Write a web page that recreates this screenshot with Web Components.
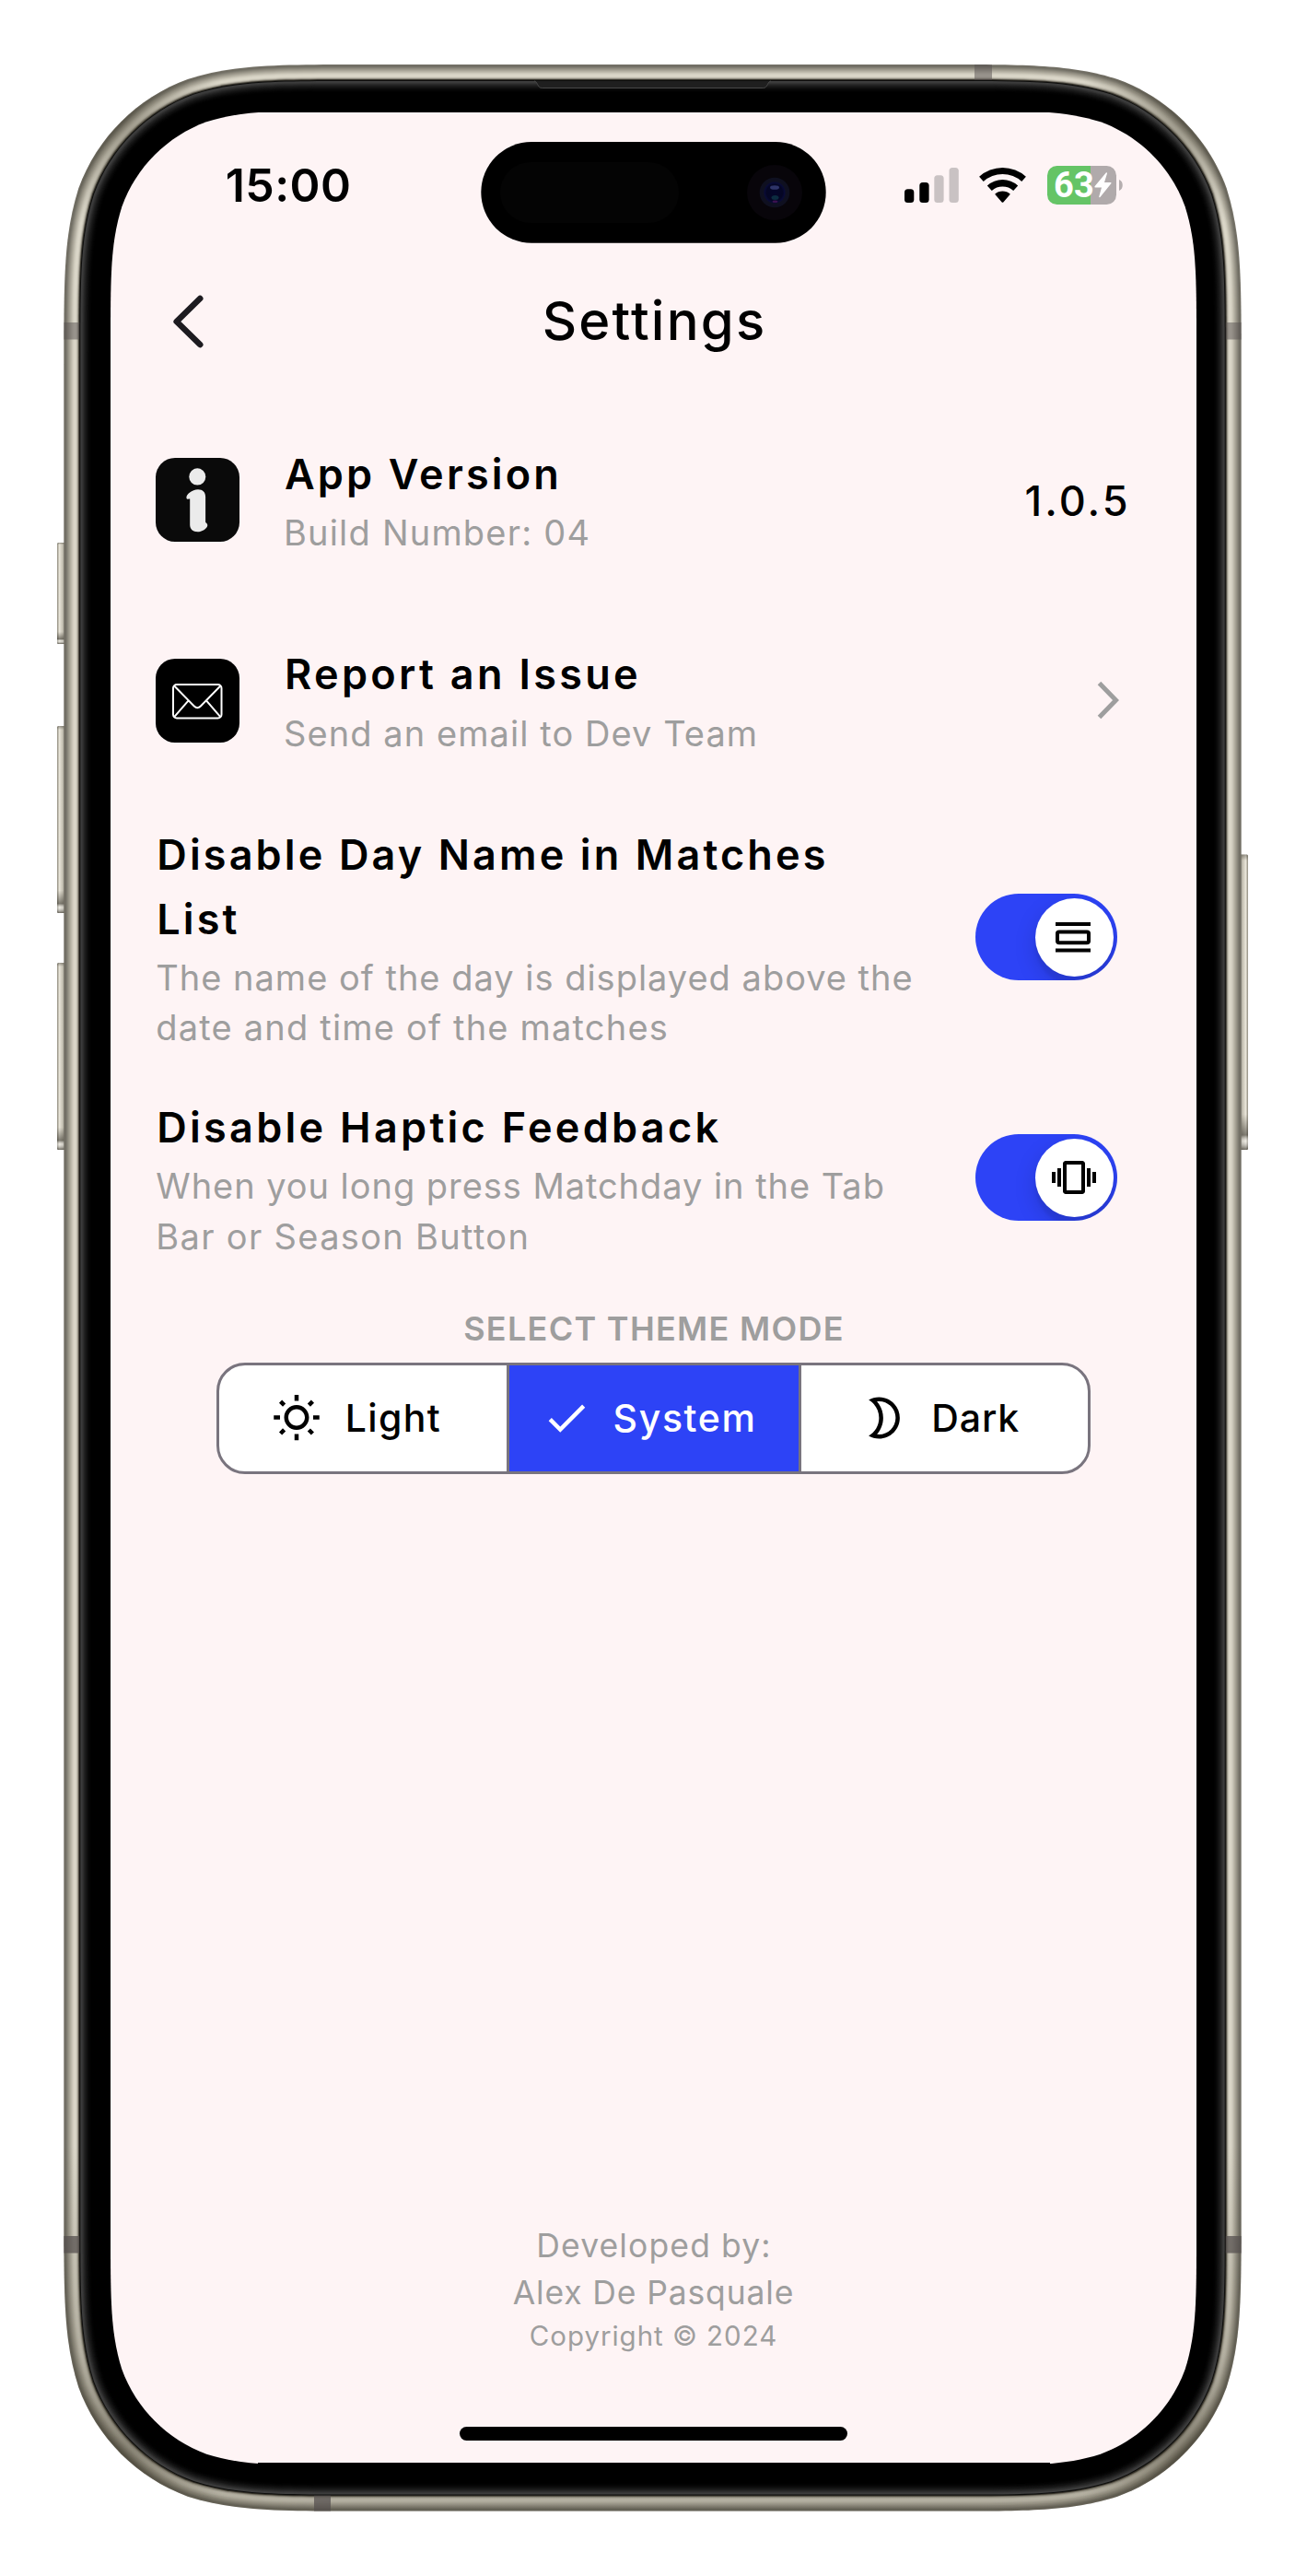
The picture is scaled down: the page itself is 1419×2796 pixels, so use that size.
<!DOCTYPE html>
<html lang="en">
<head>
<meta charset="utf-8">
<title>Settings</title>
<style>
  html, body { margin: 0; background: #fff; }
  body { width: 1419px; height: 2796px; overflow: hidden; font-family: Inter, "Liberation Sans", sans-serif; color: #000; }
</style>
</head>
<body>
<phone-frame>
  <status-bar time="15:00" battery="63"></status-bar>
  <nav-header>Settings</nav-header>
  <setting-item style="--title-ls:3.15px;--sub-ls:1.2px">
    <svg slot="icon" width="91" height="91" viewBox="0 0 91 91"><rect width="91" height="91" rx="21" fill="#0a0a0a"/><ellipse cx="45.3" cy="20.4" rx="9" ry="9.2" fill="#ebebeb"/><path d="M46 34.2c5.3 0 8.1 3.200 8.100 7.900V69.500c0 1.200 2.200 1.300 2.200 3.500 0 4-6.600 7.300-10.700 7.300-5.300 0-8.400-3-8.400-7.500V44.500c-1.500 0-3.600 1.100-3.800-1.600-.2-3.200 6-8.700 12.600-8.700z" fill="#ebebeb"/></svg>
    <span slot="title">App Version</span>
    <span slot="subtitle">Build Number: 04</span>
    <span slot="trailing" style="font:450 45px/60px Inter,sans-serif;letter-spacing:3px;margin:2px 71.5px 0 0">1.0.5</span>
  </setting-item>
  <setting-item style="--title-ls:3.3px;--sub-ls:1.07px">
    <svg slot="icon" width="91" height="91" viewBox="0 0 91 91"><rect width="91" height="91" rx="21" fill="#000"/><g fill="none" stroke="#fff" stroke-width="2"><rect x="19" y="28" width="52.500" height="36.500" rx="4"/><path d="M20.200 29.500 41.800 51.500Q45.300 55 48.800 51.500L70.300 29.500M20.200 63.200 35.400 45.600M70.300 63.200 55.200 45.600"/></g></svg>
    <span slot="title">Report an Issue</span>
    <span slot="subtitle">Send an email to Dev Team</span>
    <svg slot="trailing" width="24" height="42" viewBox="0 0 24 42" style="margin-right:84.5px"><path d="M2.500 2.500 20.500 21 2.500 39.500" fill="none" stroke="#9e9e9e" stroke-width="5"/></svg>
  </setting-item>
  <toggle-row style="height:296px;--title-ls:3.12px;--sub-ls:.99px">
    <span slot="title">Disable Day Name in Matches List</span>
    <span slot="subtitle">The name of the day is displayed above the <span style="letter-spacing:1.190px">date and time of the matches</span></span>
    <svg slot="glyph" width="48" height="48" viewBox="0 0 24 24"><path d="M2 4h19v2H2zM2 18.300h19v2H2zM4 8.200h15a2 1.800 0 0 1 2 1.800v4.300a2 1.800 0 0 1-2 1.800H4a2 1.800 0 0 1-2-1.800V10a2 1.800 0 0 1 2-1.800zm0 2v3.900h15v-3.900z" fill-rule="evenodd"/></svg>
  </toggle-row>
  <toggle-row style="height:226px;--title-ls:3.27px;--sub-ls:.95px">
    <span slot="title">Disable Haptic Feedback</span>
    <span slot="subtitle">When you long press Matchday in the Tab <span style="letter-spacing:1.330px">Bar or Season Button</span></span>
    <svg slot="glyph" width="48" height="48" viewBox="0 0 24 24"><path d="M0 15h2V9H0v6zm3 2h2V7H3v10zm19-8v6h2V9h-2zm-3 8h2V7h-2v10zM16.500 3h-9C6.670 3 6 3.670 6 4.500v15c0 .83.67 1.500 1.500 1.500h9c.83 0 1.500-.67 1.500-1.500v-15c0-.83-.67-1.500-1.500-1.500zM16 19H8V5h8v14z"/></svg>
  </toggle-row>
  <theme-picker></theme-picker>
  <app-footer></app-footer>
</phone-frame>

<script>
const define = (name, html, setup) => {
  const tpl = document.createElement('template');
  tpl.innerHTML = html;
  customElements.define(name, class extends HTMLElement {
    constructor() {
      super();
      this.attachShadow({ mode: 'open' }).append(tpl.content.cloneNode(true));
    }
    connectedCallback() { if (setup) setup(this, this.shadowRoot); }
  });
};

/* Rounded rectangle with continuous-curvature corners. */
const squircle = (x, y, w, h, r) => {
  const a = 1.528665 * r, b = 1.08849296 * r, c = .86840694 * r, d = .63149379 * r, e = .37282383 * r, f = .16905956 * r, g = .07491139 * r;
  const X = x + w, Y = y + h;
  return `M${x + a} ${y}H${X - a}C${X - b} ${y} ${X - c} ${y} ${X - d} ${y + g}C${X - e} ${y + f} ${X - f} ${y + e} ${X - g} ${y + d}C${X} ${y + c} ${X} ${y + b} ${X} ${y + a}` +
    `V${Y - a}C${X} ${Y - b} ${X} ${Y - c} ${X - g} ${Y - d}C${X - f} ${Y - e} ${X - e} ${Y - f} ${X - d} ${Y - g}C${X - c} ${Y} ${X - b} ${Y} ${X - a} ${Y}` +
    `H${x + a}C${x + b} ${Y} ${x + c} ${Y} ${x + d} ${Y - g}C${x + e} ${Y - f} ${x + f} ${Y - e} ${x + g} ${Y - d}C${x} ${Y - c} ${x} ${Y - b} ${x} ${Y - a}` +
    `V${y + a}C${x} ${y + b} ${x} ${y + c} ${x + g} ${y + d}C${x + f} ${y + e} ${x + e} ${y + f} ${x + d} ${y + g}C${x + c} ${y} ${x + b} ${y} ${x + a} ${y}Z`;
};

define('phone-frame', `
  <style>
    :host { display: grid; width: 1419px; height: 2796px; }
    svg, .screen { grid-area: 1 / 1; }
    .screen { margin: 122px 120px 123px; display: flex; flex-direction: column; min-width: 0; }
  </style>
  <svg width="1419" height="2796" viewBox="0 0 1419 2796" aria-hidden="true">
    <defs>
      <linearGradient id="key" x1="0" x2="1"><stop offset="0" stop-color="#8f8b7e"/><stop offset=".25" stop-color="#e8e4d8"/><stop offset=".6" stop-color="#c4c0b2"/><stop offset="1" stop-color="#76726a"/></linearGradient>
      <linearGradient id="keyR" x1="1" x2="0"><stop offset="0" stop-color="#8f8b7e"/><stop offset=".25" stop-color="#e8e4d8"/><stop offset=".6" stop-color="#c4c0b2"/><stop offset="1" stop-color="#76726a"/></linearGradient>
      <linearGradient id="keyEnd" x1="0" x2="0" y1="0" y2="1"><stop offset="0" stop-color="#3a372e" stop-opacity=".45"/><stop offset=".02" stop-color="#3a372e" stop-opacity="0"/><stop offset=".88" stop-color="#3a372e" stop-opacity="0"/><stop offset=".95" stop-color="#3a372e" stop-opacity=".6"/><stop offset=".97" stop-color="#fff" stop-opacity=".3"/><stop offset="1" stop-color="#3a372e" stop-opacity=".7"/></linearGradient>
      <linearGradient id="shade" gradientUnits="userSpaceOnUse" x1="0" y1="70" x2="0" y2="2726"><stop offset="0" stop-color="#3a3526" stop-opacity="0"/><stop offset=".85" stop-color="#3a3526" stop-opacity="0"/><stop offset=".93" stop-color="#3a3526" stop-opacity=".24"/><stop offset="1" stop-color="#3a3526" stop-opacity=".24"/></linearGradient>
      <radialGradient id="corner"><stop offset="0" stop-color="#3a3526" stop-opacity=".4"/><stop offset="1" stop-color="#3a3526" stop-opacity="0"/></radialGradient>
      <radialGradient id="lens"><stop offset="0" stop-color="#04062a"/><stop offset=".7" stop-color="#050624"/><stop offset=".85" stop-color="#080a36"/><stop offset="1" stop-color="#10111f"/></radialGradient>
      <clipPath id="body"><path id="bodyPath"/></clipPath>
    </defs>
    <g id="keys"></g>
    <g id="metal"></g>
    <g clip-path="url(#body)">
      <circle cx="128" cy="129" r="120" fill="url(#corner)"/><circle cx="1289" cy="129" r="120" fill="url(#corner)"/>
      <circle cx="128" cy="2667" r="120" fill="url(#corner)"/><circle cx="1289" cy="2667" r="120" fill="url(#corner)"/>
      <rect x="60" y="60" width="1300" height="2680" fill="url(#shade)"/>
      <g fill="#55504f" fill-opacity=".5">
        <path d="M69 350h18v18.500H69zM1330 350h18v18.500h-18zM1058 70h19v17h-19z"/>
        <path fill-opacity=".75" d="M69 2427h18v18.500H69zM1330 2427h18v18.500h-18zM341 2708h18v18h-18z"/>
      </g>
    </g>
    <g id="bezel"></g>
    <path d="M580 88C584 88 583 95.500 588.500 95.500H828.500C834 95.500 833 88 837 88Z" fill="#1f1f1f"/>
    <path d="M580 88C584 88 583 95.500 588.500 95.500H828.500C834 95.500 833 88 837 88" fill="none" stroke="#484848"/>
    <path id="glass" fill="#fef4f5"/>
    <path d="M280 119h860v3H280zM280 2673h860v4H280z"/>
    <rect x="522.300" y="154" width="374.400" height="109.700" rx="54.850"/>
    <rect x="543" y="176" width="194" height="66" rx="33" fill="#040404"/>
    <circle cx="841" cy="209" r="30" fill="#08050a"/><circle cx="841" cy="209" r="16.300" fill="#0f1020"/><circle cx="841" cy="209" r="12.500" fill="url(#lens)"/>
    <ellipse cx="841" cy="203.500" rx="5" ry="2.300" fill="#2e3468"/><ellipse cx="841.500" cy="214.500" rx="4" ry="2.500" fill="#0c2c40"/><ellipse cx="841.500" cy="218.800" rx="3" ry="1.300" fill="#3c1250"/>
  </svg>
  <div class="screen"><slot></slot></div>`, (el, root) => {
  const ring = (i, r) => squircle(69.3 + i, 70 + i, 1278.4 - 2 * i, 2655.6 - 2 * i, r - i);
  const R = 213;
  const metal = ['#77746a', '#6f6c61', '#77746a', '#838075', '#918d81', '#9d998c', '#a9a598', '#b5b1a3', '#c0bcae', '#ccc8ba', '#d5d1c3', '#dad6c8', '#dbd7c9', '#d4d0c2', '#bdb9ac', '#8c887c', '#3a372f'];
  root.getElementById('metal').innerHTML = metal.map((c, i) => `<path d="${ring(i, R)}" fill="${c}"/>`).join('');
  const dark = ['#0d0d0c', '#3e3e3e', '#3b3b3b', '#333', '#2a2a2a', '#222', '#1b1b1b', '#151515', '#101010', '#0b0b0b', '#070707', '#040404', '#020202', '#000'];
  root.getElementById('bezel').innerHTML = dark.map((c, i) => `<path d="${ring(17 + i, R)}" fill="${c}"/>`).join('');
  root.getElementById('bodyPath').setAttribute('d', ring(0, R));
  root.getElementById('glass').setAttribute('d', squircle(120, 120, 1179, 2556, 165));
  root.getElementById('keys').innerHTML = [[62, 589, 110, 'key'], [62, 788, 203, 'key'], [62, 1045, 203, 'key'], [1345, 927.5, 320.5, 'keyR']]
    .map(([x, y, h, g]) => `<rect x="${x}" y="${y}" width="10" height="${h}" rx="1.500" fill="url(#${g})"/><rect x="${x}" y="${y}" width="10" height="${h}" rx="1.500" fill="url(#keyEnd)"/>`).join('');
});

define('status-bar', `
  <style>
    :host { display: grid; grid-template-columns: 402px 375px 1fr; height: 157px; align-items: center; }
    .time { padding-left: 124.700px; font: 600 50px/60px Inter, sans-serif; letter-spacing: .45px; }
    .icons { grid-column: 3; display: flex; align-items: center; padding-left: 85.300px; }
    .signal { margin-right: 21px; }
    .wifi { margin-right: 22.500px; }
    .battery { display: flex; align-items: center; justify-content: flex-start; width: 75.500px; height: 42px; border-radius: 10.500px; background: linear-gradient(90deg, #65c466 47px, #b0aaab 47px); color: #fff; }
    .battery span { width: 43.500px; font: 700 38px/42px Roboto, Inter, sans-serif; padding-left: 7.300px; white-space: nowrap; }
    .battery svg { flex: none; }
    .nub { margin-left: 2.700px; }
  </style>
  <div class="time"></div>
  <div class="icons">
    <svg class="signal" width="60" height="38" viewBox="0 0 60 38"><rect y="23.300" width="10.300" height="14.700" rx="3.500"/><rect x="16.300" y="16" width="10.300" height="22" rx="3.500"/><rect x="32.300" y="8.300" width="10.300" height="29.700" rx="3.500" fill="#c9c2c3"/><rect x="48.500" width="10.300" height="38" rx="3.500" fill="#c9c2c3"/></svg>
    <svg class="wifi" width="51" height="38" viewBox="-25.500 -38 51 38"><path d="M-25.400-28.200A38 38 0 0 1 25.400-28.200L20.740-23.040A31 31 0 0 0-20.740-23.040ZM-16.700-18.600A25 25 0 0 1 16.700-18.600L11.710-13A17.500 17.500 0 0 0-11.710-13ZM-8.360-9.300A12.500 12.500 0 0 1 8.360-9.300L.8-.5Q0 .2-.8-.5Z"/></svg>
    <div class="battery"><span></span><svg width="19" height="28" viewBox="0 0 19 28"><path d="M13 .3 0.500 15.300Q0 16.600 1.200 16.600H8L5.200 26.600Q5.300 27.900 6.400 27L18.500 12Q18.800 10.900 17.700 10.900H11L14 1.300Q14.100 0 13 .3Z" fill="#fff"/></svg></div>
    <svg class="nub" width="5" height="12" viewBox="0 0 5 12"><path d="M0 0C5 1.500 5 10.500 0 12Z" fill="#b5aeaf"/></svg>
  </div>`, (el, root) => {
  root.querySelector('.time').textContent = el.getAttribute('time');
  root.querySelector('.battery span').textContent = el.getAttribute('battery');
});

define('nav-header', `
  <style>
    :host { display: grid; grid-template-columns: 1fr auto 1fr; align-items: center; height: 139px; margin-bottom: 16px; }
    svg { margin-left: 67px; }
    .title { font: 500 58px/70px Inter, sans-serif; letter-spacing: 2.200px; padding-left: 2px; margin-top: -1px; }
  </style>
  <svg width="36" height="62" viewBox="0 0 36 62"><path d="M30.200 6 4.700 31 30.200 56" fill="none" stroke="#1d1b20" stroke-width="6.600" stroke-linecap="round" stroke-linejoin="round"/></svg>
  <div class="title"><slot></slot></div>`);

const rowText = `
    .text { display: flex; flex-direction: column; gap: 1.500px; }
    .title { font: 600 45px/69.600px Inter, sans-serif; letter-spacing: var(--title-ls); padding-left: 1px; }
    .sub { font: 400 38px/54.500px Inter, sans-serif; letter-spacing: var(--sub-ls); color: #9e9e9e; }`;

define('setting-item', `
  <style>
    :host { display: flex; align-items: center; height: 217.500px; padding-left: 48.600px; }
    ${rowText}
    .text { flex: 1; margin-left: 48.400px; }
    ::slotted(svg) { display: block; }
  </style>
  <slot name="icon"></slot>
  <div class="text"><div class="title"><slot name="title"></slot></div><div class="sub"><slot name="subtitle"></slot></div></div>
  <slot name="trailing"></slot>`);

define('toggle-row', `
  <style>
    :host { display: flex; align-items: center; justify-content: space-between; box-sizing: border-box; padding: 0 85.800px 0 49.300px; }
    ${rowText}
    .text { width: 828px; padding-top: 2px; }
    .switch { box-sizing: border-box; display: flex; justify-content: flex-end; width: 154.300px; height: 94px; padding: 4.500px; border-radius: 47px; background: #2d43f6; overflow: hidden; }
    .knob { display: flex; align-items: center; justify-content: center; width: 85px; height: 85px; border-radius: 50%; background: #fff; box-shadow: 0 9px 24px rgba(0,0,0,.15), 0 9px 3px rgba(0,0,0,.06); }
  </style>
  <div class="text"><div class="title"><slot name="title"></slot></div><div class="sub"><slot name="subtitle"></slot></div></div>
  <div class="switch"><div class="knob"><slot name="glyph"></slot></div></div>`);

define('theme-picker', `
  <style>
    :host { display: flex; flex-direction: column; align-items: center; margin-top: 29px; }
    .label { font: 600 36px/44px Inter, sans-serif; letter-spacing: 1.280px; color: #9e9e9e; padding-left: 1px; }
    .group { box-sizing: border-box; display: flex; width: 949.500px; height: 121px; margin-top: 14.500px; border: 3px solid #79747e; border-radius: 31px; background: #fff; overflow: hidden; }
    .seg { flex: 1; display: flex; align-items: center; justify-content: flex-start; box-sizing: border-box; font: 500 41px/60px Inter, sans-serif; }
    .seg svg { margin-right: 24px; }
    .first { flex: 0 0 312px; }
    .on { background: #2d43f6; color: #fff; border: solid #79747e; border-width: 0 3px; flex: 0 0 320.500px; }
  </style>
  <div class="label">SELECT THEME MODE</div>
  <div class="group">
    <div class="seg first" style="padding-left:57px;letter-spacing:1.350px"><svg style="margin-right:26px" width="54" height="54" viewBox="0 -.3 24 24"><path fill-rule="evenodd" d="M6.760 4.840l-1.800-1.790-1.410 1.410 1.790 1.790 1.420-1.410zM4 10.500H1v2h3v-2zm9-9.950h-2V3.500h2V.55zm7.450 3.910l-1.410-1.410-1.790 1.790 1.410 1.410 1.790-1.790zm-3.210 13.700l1.790 1.800 1.410-1.410-1.800-1.790-1.400 1.400zM20 10.500v2h3v-2h-3zm-8-5c-3.310 0-6 2.690-6 6s2.690 6 6 6 6-2.690 6-6-2.690-6-6-6zm0 10c-2.210 0-4-1.790-4-4s1.790-4 4-4 4 1.790 4 4-1.790 4-4 4zm-1 6.950h2V19.500h-2v2.950zm-7.450-3.910l1.410 1.410 1.790-1.800-1.410-1.410-1.790 1.800z"/></svg>Light</div>
    <div class="seg on" style="padding-left:34.800px;letter-spacing:1.640px"><svg width="54" height="54" viewBox="0 0 24 24" fill="#fff"><path d="M9 16.170L4.830 12l-1.420 1.410L9 19 21 7l-1.410-1.410z"/></svg>System</div>
    <div class="seg" style="padding-left:63px;letter-spacing:.88px"><svg width="54" height="54" viewBox="0 0 24 24"><path d="M9.500 4c4.410 0 8 3.590 8 8s-3.590 8-8 8c-.34 0-.68-.02-1.010-.07 1.910-2.160 3.010-4.980 3.010-7.930s-1.100-5.770-3.010-7.930C8.820 4.020 9.160 4 9.500 4m0-2c-1.820 0-3.530.5-5 1.350 2.990 1.730 5 4.950 5 8.650s-2.010 6.920-5 8.650c1.470.85 3.180 1.350 5 1.350 5.520 0 10-4.480 10-10S15.020 2 9.500 2z"/></svg>Dark</div>
  </div>`);

define('app-footer', `
  <style>
    :host { display: flex; flex-direction: column; align-items: center; margin-top: auto; padding-bottom: 24px; color: #9e9e9e; font: 400 35.500px/51px Inter, sans-serif; }
    .small { font-size: 29.500px; line-height: 43.800px; letter-spacing: .96px; }
    .home { width: 421px; height: 15.300px; border-radius: 8px; background: #000; margin-top: 75.500px; }
  </style>
  <div style="letter-spacing:1.120px;padding-left:1px">Developed by:</div>
  <div style="letter-spacing:.85px">Alex De Pasquale</div>
  <div class="small">Copyright © 2024</div>
  <div class="home"></div>`);
</script>
</body>
</html>
